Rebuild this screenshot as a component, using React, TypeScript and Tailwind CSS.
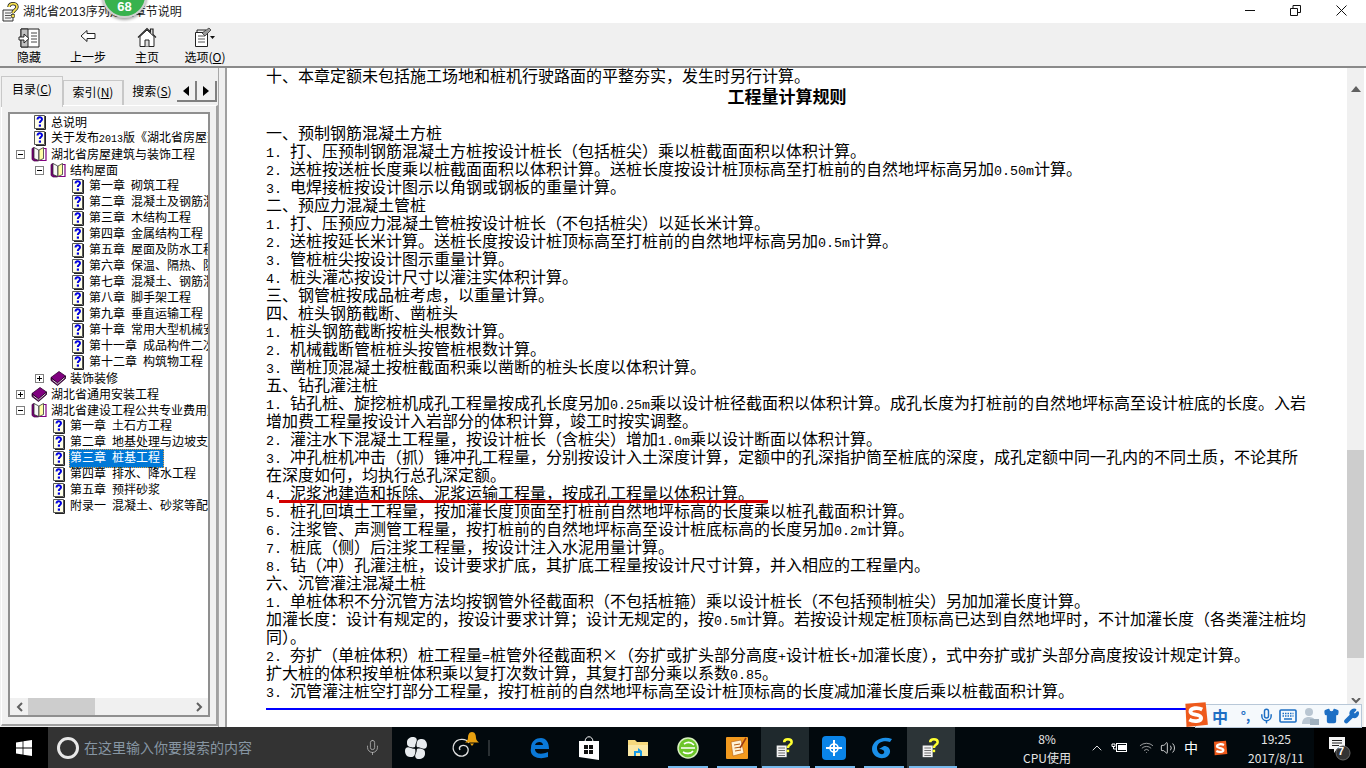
import { ChevronUp, Mic, Shirt, Volume2, Wifi, Wrench } from 'lucide-react';

// half-width runs sit at 5/6 of the CJK size so they take half a cell, like SimSun
function Mixed({ text, latin }: { text: string; latin: string }) {
  const parts = text.split(/([\x20-\x7e]+)/);
  return (
    <>
      {parts.map((p, i) =>
        /^[\x20-\x7e]+$/.test(p) ? (
          <span key={i} className={`whitespace-pre [font-family:'Liberation_Mono',monospace] ${latin}`}>{p}</span>
        ) : (
          <span key={i}>{p}</span>
        )
      )}
    </>
  );
}

function HelpDoc() {
  return (
    <svg width="13" height="16" viewBox="0 0 13 16" className="shrink-0">
      <path d="M0.5 1.5H10.5V14.5H0.5Z" fill="#ffffe8" stroke="#555" />
      <path d="M11.5 2V15.5H2" fill="none" stroke="#222" />
      <path d="M3.5 5.5C3.5 2.5 8 2.5 8 5.2C8 7 5.8 7 5.8 9" fill="none" stroke="#0000e0" strokeWidth="2" />
      <rect x="4.8" y="10.5" width="2.2" height="2.2" fill="#0000e0" />
    </svg>
  );
}

function OpenBook() {
  return (
    <svg width="16" height="16" viewBox="0 0 16 16" className="shrink-0">
      <path d="M1 2.5L3 1.5V12.5L7.5 14.5V15H3L1 13.5Z" fill="#800080" stroke="#400040" strokeWidth="0.7" />
      <path d="M3 1.5L7.8 4V14.5L3 12.5Z" fill="#f8f8f8" stroke="#333" strokeWidth="0.8" />
      <path d="M8 4L12.5 1.5V12.5L8 14.5Z" fill="#ffffa8" stroke="#333" strokeWidth="0.8" />
      <path d="M13 2.5H15V14.5H8.5" fill="none" stroke="#800080" strokeWidth="1.2" />
    </svg>
  );
}

function ClosedBook() {
  return (
    <svg width="16" height="16" viewBox="0 0 16 16" className="shrink-0">
      <path d="M1 7.5L9 1.5L15.5 6L7.5 13Z" fill="#800080" stroke="#300030" strokeWidth="0.8" />
      <path d="M1 7.5V10.5L7.5 15.5L15.5 8.5V6L7.5 13Z" fill="#500050" stroke="#200020" strokeWidth="0.8" />
      <path d="M2.5 10L7.5 13.8L14.5 7.8" fill="none" stroke="#e8e8e8" strokeWidth="0.9" />
    </svg>
  );
}

function Expander({ open }: { open: boolean }) {
  return (
    <span className="relative block h-[9px] w-[9px] shrink-0 border border-[#808080] bg-white">
      <span className="absolute left-[1px] top-[3px] h-px w-[5px] bg-black" />
      {!open && <span className="absolute left-[3px] top-[1px] h-[5px] w-px bg-black" />}
    </span>
  );
}

type TreeItem = { label: string; kind: 'doc' | 'open' | 'closed'; indent: string; selected?: boolean };

const tree: TreeItem[] = [
  { label: '总说明', kind: 'doc', indent: 'pl-[24px]' },
  { label: '关于发布2013版《湖北省房屋建筑与装饰工程》', kind: 'doc', indent: 'pl-[24px]' },
  { label: '湖北省房屋建筑与装饰工程', kind: 'open', indent: 'pl-[6px]' },
  { label: '结构屋面', kind: 'open', indent: 'pl-[25px]' },
  { label: '第一章 砌筑工程', kind: 'doc', indent: 'pl-[62px]' },
  { label: '第二章 混凝土及钢筋混凝土工程', kind: 'doc', indent: 'pl-[62px]' },
  { label: '第三章 木结构工程', kind: 'doc', indent: 'pl-[62px]' },
  { label: '第四章 金属结构工程', kind: 'doc', indent: 'pl-[62px]' },
  { label: '第五章 屋面及防水工程', kind: 'doc', indent: 'pl-[62px]' },
  { label: '第六章 保温、隔热、防腐工程', kind: 'doc', indent: 'pl-[62px]' },
  { label: '第七章 混凝土、钢筋混凝土模板', kind: 'doc', indent: 'pl-[62px]' },
  { label: '第八章 脚手架工程', kind: 'doc', indent: 'pl-[62px]' },
  { label: '第九章 垂直运输工程', kind: 'doc', indent: 'pl-[62px]' },
  { label: '第十章 常用大型机械安拆', kind: 'doc', indent: 'pl-[62px]' },
  { label: '第十一章 成品构件二次运输', kind: 'doc', indent: 'pl-[62px]' },
  { label: '第十二章 构筑物工程', kind: 'doc', indent: 'pl-[62px]' },
  { label: '装饰装修', kind: 'closed', indent: 'pl-[25px]' },
  { label: '湖北省通用安装工程', kind: 'closed', indent: 'pl-[6px]' },
  { label: '湖北省建设工程公共专业费用定额', kind: 'open', indent: 'pl-[6px]' },
  { label: '第一章 土石方工程', kind: 'doc', indent: 'pl-[43px]' },
  { label: '第二章 地基处理与边坡支护工程', kind: 'doc', indent: 'pl-[43px]' },
  { label: '第三章 桩基工程', kind: 'doc', indent: 'pl-[43px]', selected: true },
  { label: '第四章 排水、降水工程', kind: 'doc', indent: 'pl-[43px]' },
  { label: '第五章 预拌砂浆', kind: 'doc', indent: 'pl-[43px]' },
  { label: '附录一 混凝土、砂浆等配合比', kind: 'doc', indent: 'pl-[43px]' },
];

function TreeRow({ item }: { item: TreeItem }) {
  return (
    <div className={`flex h-4 items-center whitespace-nowrap ${item.indent}`}>
      {item.kind !== 'doc' && <Expander open={item.kind === 'open'} />}
      {item.kind !== 'doc' && <span className="w-[6px] shrink-0" />}
      {item.kind === 'doc' && <HelpDoc />}
      {item.kind === 'open' && <OpenBook />}
      {item.kind === 'closed' && <ClosedBook />}
      <span
        className={
          item.selected
            ? 'ml-[3px] border border-dotted border-[#e8a040] bg-[#0078d7] pr-[3px] leading-[14px] text-white'
            : 'ml-[4px] leading-4 text-black'
        }
      >
        <Mixed text={item.label} latin="text-[10px]" />
      </span>
    </div>
  );
}

const body: string[] = [
  '一、预制钢筋混凝土方桩',
  '1. 打、压预制钢筋混凝土方桩按设计桩长（包括桩尖）乘以桩截面面积以体积计算。',
  '2. 送桩按送桩长度乘以桩截面面积以体积计算。送桩长度按设计桩顶标高至打桩前的自然地坪标高另加0.50m计算。',
  '3. 电焊接桩按设计图示以角钢或钢板的重量计算。',
  '二、预应力混凝土管桩',
  '1. 打、压预应力混凝土管桩按设计桩长（不包括桩尖）以延长米计算。',
  '2. 送桩按延长米计算。送桩长度按设计桩顶标高至打桩前的自然地坪标高另加0.5m计算。',
  '3. 管桩桩尖按设计图示重量计算。',
  '4. 桩头灌芯按设计尺寸以灌注实体积计算。',
  '三、钢管桩按成品桩考虑，以重量计算。',
  '四、桩头钢筋截断、凿桩头',
  '1. 桩头钢筋截断按桩头根数计算。',
  '2. 机械截断管桩桩头按管桩根数计算。',
  '3. 凿桩顶混凝土按桩截面积乘以凿断的桩头长度以体积计算。',
  '五、钻孔灌注桩',
  '1. 钻孔桩、旋挖桩机成孔工程量按成孔长度另加0.25m乘以设计桩径截面积以体积计算。成孔长度为打桩前的自然地坪标高至设计桩底的长度。入岩',
  '增加费工程量按设计入岩部分的体积计算，竣工时按实调整。',
  '2. 灌注水下混凝土工程量，按设计桩长（含桩尖）增加1.0m乘以设计断面以体积计算。',
  '3. 冲孔桩机冲击（抓）锤冲孔工程量，分别按设计入土深度计算，定额中的孔深指护筒至桩底的深度，成孔定额中同一孔内的不同土质，不论其所',
  '在深度如何，均执行总孔深定额。',
  '4. 泥浆池建造和拆除、泥浆运输工程量，按成孔工程量以体积计算。',
  '5. 桩孔回填土工程量，按加灌长度顶面至打桩前自然地坪标高的长度乘以桩孔截面积计算。',
  '6. 注浆管、声测管工程量，按打桩前的自然地坪标高至设计桩底标高的长度另加0.2m计算。',
  '7. 桩底（侧）后注浆工程量，按设计注入水泥用量计算。',
  '8. 钻（冲）孔灌注桩，设计要求扩底，其扩底工程量按设计尺寸计算，并入相应的工程量内。',
  '六、沉管灌注混凝土桩',
  '1. 单桩体积不分沉管方法均按钢管外径截面积（不包括桩箍）乘以设计桩长（不包括预制桩尖）另加加灌长度计算。',
  '加灌长度：设计有规定的，按设计要求计算；设计无规定的，按0.5m计算。若按设计规定桩顶标高已达到自然地坪时，不计加灌长度（各类灌注桩均',
  '同）。',
  '2. 夯扩（单桩体积）桩工程量=桩管外径截面积×（夯扩或扩头部分高度+设计桩长+加灌长度），式中夯扩或扩头部分高度按设计规定计算。',
  '扩大桩的体积按单桩体积乘以复打次数计算，其复打部分乘以系数0.85。',
  '3. 沉管灌注桩空打部分工程量，按打桩前的自然地坪标高至设计桩顶标高的长度减加灌长度后乘以桩截面积计算。',
];

function BodyLine({ text }: { text: string }) {
  return (
    <div className="h-[18px] whitespace-nowrap text-[16px] leading-[18px] text-black">
      <Mixed text={text} latin="text-[13.33px]" />
    </div>
  );
}

function ToolButton({ label, center, children }: { label: React.ReactNode; center: string; children: React.ReactNode }) {
  return (
    <div className={`flex flex-col items-center ${center}`}>
      <div className="flex h-[24px] items-end">{children}</div>
      <div className="mt-px whitespace-nowrap text-[12px] leading-[16px] text-black">{label}</div>
    </div>
  );
}

function TaskHelp() {
  return (
    <svg width="20" height="20" viewBox="0 0 24 24">
      <path d="M2 9H14V23H2Z" fill="#f2f2f2" />
      <path d="M4 12H12M4 15H12M4 18H12M4 21H12" stroke="#555" strokeWidth="1" />
      <path d="M11 5C11 0.5 20 0.5 20 5C20 8.5 15.5 8 15.5 12" fill="none" stroke="#ffff30" strokeWidth="3" />
      <rect x="14" y="14" width="3" height="3" fill="#ffff30" />
    </svg>
  );
}

function Sogou({ size }: { size: string }) {
  return (
    <svg viewBox="0 0 24 24" className={size}>
      <path d="M3 2.5L21 1L23 21L4 23Z" fill="#ee5a1c" />
      <path d="M18 7.5C14 5.5 7.5 6 7.5 9.5C7.5 13 17 11 17 15C17 18.5 10 18.5 6.5 16.5" fill="none" stroke="#fff" strokeWidth="3.4" />
    </svg>
  );
}

export default function App() {
  return (
    <div className="relative flex h-[768px] w-[1366px] flex-col overflow-hidden bg-white [font-family:'Noto_Sans_CJK_SC',sans-serif]">
      {/* title bar */}
      <div className="relative flex h-[23px] shrink-0 items-center bg-white pl-[2px]">
        <svg width="18" height="20" viewBox="0 0 18 20" className="shrink-0">
          <path d="M1 8H11V19H1Z" fill="#f4f4f4" stroke="#333" />
          <path d="M3 11H9M3 13.5H9M3 16H9" stroke="#555" />
          <path d="M7 5C7 0.5 15 0.5 15 5C15 8 11 8 11 11" fill="none" stroke="#222" strokeWidth="3.4" />
          <path d="M7 5C7 0.5 15 0.5 15 5C15 8 11 8 11 11" fill="none" stroke="#f5e050" strokeWidth="1.8" />
          <rect x="9.5" y="12.5" width="3" height="3" fill="#f5e050" stroke="#222" strokeWidth="0.6" />
        </svg>
        <span className="ml-[3px] text-[12px] text-[#1a1a1a]">
          湖北省<span className="[font-family:'Liberation_Sans',sans-serif]">2013</span>序列定额章节说明
        </span>
        <div className="ml-auto flex h-full items-center">
          <svg width="45" height="23" viewBox="0 0 45 23" className="shrink-0"><path d="M0 10.5H10" stroke="#111" /></svg>
          <svg width="46" height="23" viewBox="0 0 46 23" className="shrink-0">
            <path d="M0.5 8.5H7.5V15.5H0.5ZM3 8V5.5H10.5V12.5H8" fill="none" stroke="#111" />
          </svg>
          <svg width="30" height="23" viewBox="0 0 30 23" className="shrink-0"><path d="M0.5 5.5L10.5 15.5M10.5 5.5L0.5 15.5" stroke="#111" /></svg>
        </div>
        {/* floating speed ball */}
        <div className="absolute left-[102px] top-[-27px] z-20 flex h-[45px] w-[45px] items-end justify-center rounded-full border-2 border-[#d0d0d0] bg-[#38b24e] pb-[2px] text-[13px] font-bold leading-[14px] text-white shadow-[0_2px_3px_rgba(0,0,0,0.35)] [font-family:'Liberation_Sans',sans-serif]">
          68
        </div>
      </div>

      {/* toolbar */}
      <div className="relative flex h-[45px] shrink-0 border-b-2 border-[#8a8a8a] bg-[#f0f0f0] pt-px">
        <ToolButton label="隐藏" center="ml-[9px] w-[40px]">
          <svg width="22" height="20" viewBox="0 0 22 20">
            <path d="M3 1H21V19H3Z" fill="#fff" stroke="#222" />
            <path d="M3 1H10V19H3Z" fill="#c0c0c0" stroke="#222" />
            <path d="M13 5H19M13 8H19M13 11H19M13 14H19" stroke="#444" />
            <path d="M1 9H6V6L11 10.5L6 15V12H1Z" fill="#fff" stroke="#222" />
          </svg>
        </ToolButton>
        <ToolButton label="上一步" center="ml-[19px] w-[40px]">
          <svg width="16" height="14" viewBox="0 0 16 14" className="mb-[5px]">
            <path d="M1 7L7 1.5V4.5H15V9.5H7V12.5Z" fill="#fff" stroke="#222" />
          </svg>
        </ToolButton>
        <ToolButton label="主页" center="ml-[19px] w-[40px]">
          <svg width="20" height="21" viewBox="0 0 20 21">
            <path d="M1 10.5L10 1.5L13.5 5V2H16V7.5L19 10.5" fill="none" stroke="#222" strokeWidth="1.2" />
            <path d="M3 9.5V19.5H17V9.5L10 3Z" fill="#fff" stroke="#222" />
            <path d="M8 19.5V13H12V19.5" fill="#ddd" stroke="#222" />
          </svg>
        </ToolButton>
        <ToolButton label={<span>选项(<u>O</u>)</span>} center="ml-[14px] w-[48px]">
          <svg width="22" height="21" viewBox="0 0 22 21">
            <path d="M1.5 5.5H13.5V19.5H1.5Z" fill="#fff" stroke="#222" />
            <path d="M3 5.5V3H12" fill="none" stroke="#222" />
            <path d="M4 9H11M4 12H11M4 15H11" stroke="#555" />
            <path d="M8 6L15 1L17 3L11 9Z" fill="#999" stroke="#222" strokeWidth="0.7" />
            <path d="M16 9H21L18.5 12Z" fill="#111" />
          </svg>
        </ToolButton>
      </div>

      {/* main area */}
      <div className="flex h-[659px] shrink-0">
        {/* navigation pane */}
        <div className="flex w-[218px] shrink-0 flex-col bg-[#f0f0f0] pl-px pt-[8px]">
          <div className="relative z-10 flex h-[29px] items-end text-[12px] text-black">
            <div className="mb-[-2px] flex h-[31px] w-[62px] items-center justify-center border border-b-0 border-[#c8c8c8] bg-[#f0f0f0] pb-[7px]">
              目录(<u>C</u>)
            </div>
            <div className="flex h-[25px] w-[60px] items-center justify-center border border-b-0 border-[#c8c8c8] bg-[#f0f0f0] pb-[3px]">
              索引(<u>N</u>)
            </div>
            <div className="flex h-[25px] w-[54px] items-center justify-center overflow-hidden whitespace-nowrap border-l border-[#c8c8c8] bg-[#f0f0f0] pb-[3px] pl-[3px]">
              搜索(<u>S</u>)
            </div>
            <div className="mb-[3px] flex">
              <div className="flex h-[21px] w-[20px] items-center justify-center border-r-2 border-b-2 border-[#808080] bg-[#f0f0f0]">
                <svg width="6" height="10" viewBox="0 0 6 10"><path d="M6 0V10L0 5Z" fill="#000" /></svg>
              </div>
              <div className="flex h-[21px] w-[20px] items-center justify-center border-r-2 border-b-2 border-[#808080] bg-[#f0f0f0]">
                <svg width="6" height="10" viewBox="0 0 6 10"><path d="M0 0V10L6 5Z" fill="#000" /></svg>
              </div>
            </div>
          </div>
          <div className="mb-[1px] flex flex-1 flex-col border-b-2 border-r-2 border-l border-t border-b-[#a0a0a0] border-l-white border-r-[#a0a0a0] border-t-white px-[6px] pb-[7px] pt-[6px]">
            <div className="flex w-[202px] flex-1 flex-col border-2 border-[#8f8f8f] bg-white">
              <div className="min-h-0 flex-1 overflow-hidden text-[12px]">
                {tree.map((item) => (
                  <TreeRow key={`${item.indent}-${item.label}`} item={item} />
                ))}
              </div>
              <div className="flex h-[17px] shrink-0 items-center bg-[#f0f0f0]">
                <div className="flex w-[18px] justify-center">
                  <svg width="7" height="10" viewBox="0 0 7 10"><path d="M6 1L2 5L6 9" fill="none" stroke="#606060" strokeWidth="2" /></svg>
                </div>
                <div className="h-full w-[67px] bg-[#cdcdcd]" />
                <div className="ml-auto flex w-[18px] justify-center">
                  <svg width="7" height="10" viewBox="0 0 7 10"><path d="M1 1L5 5L1 9" fill="none" stroke="#606060" strokeWidth="2" /></svg>
                </div>
              </div>
            </div>
          </div>
        </div>

        {/* splitter */}
        <div className="w-[9px] shrink-0 border-l border-r-2 border-l-[#a8a8a8] border-r-[#a0a0a0] bg-[#f0f0f0]" />

        {/* topic pane */}
        <div className="relative min-w-0 flex-1 overflow-hidden bg-white pl-[39px] pr-[39px]">
          <div className="-mt-[2px]">
            <BodyLine text="十、本章定额未包括施工场地和桩机行驶路面的平整夯实，发生时另行计算。" />
            <div className="mb-[18px] h-[21px] whitespace-nowrap text-center text-[17px] font-bold leading-[24px] text-black">工程量计算规则</div>
            {body.map((line) => (
              <BodyLine key={line} text={line} />
            ))}
            <div className="mt-[9px] h-[2px] bg-[#0000ff]" />
          </div>
          {/* hand drawn red mark in the screenshot */}
          <div className="absolute left-[52px] top-[432px] h-[3px] w-[489px] bg-[#d40000]" />
        </div>

        {/* vertical scrollbar */}
        <div className="flex w-[17px] shrink-0 flex-col items-center bg-[#f0f0f0]">
          <div className="flex h-[24px] w-full items-end justify-center">
            <svg width="10" height="6" viewBox="0 0 10 6"><path d="M5 0L10 6H0Z" fill="#606060" /></svg>
          </div>
          <div className="h-[358px]" />
          <div className="h-[208px] w-full bg-[#cdcdcd]" />
          <div className="mt-[40px] flex justify-center">
            <svg width="10" height="6" viewBox="0 0 10 6"><path d="M1 0L5 4L9 0" fill="none" stroke="#606060" strokeWidth="2" /></svg>
          </div>
        </div>
        <div className="w-[2px] shrink-0 bg-white" />
      </div>

      {/* taskbar */}
      <div className="relative flex h-[41px] shrink-0 bg-[#02090d] text-white">
        <div className="flex w-12 items-center justify-center bg-black">
          <svg width="16" height="16" viewBox="0 0 16 16">
            <path d="M0 2.4L6.6 1.4V7.6H0ZM7.4 1.3L16 0V7.6H7.4ZM0 8.4H6.6V14.6L0 13.6ZM7.4 8.4H16V16L7.4 14.7Z" fill="#fff" />
          </svg>
        </div>
        <div className="flex w-[344px] items-center bg-[#333333] pl-[9px]">
          <div className="h-[22px] w-[22px] rounded-full border-[3px] border-[#e8e8e8]" />
          <span className="ml-[5px] text-[14px] text-[#8796a3]">在这里输入你要搜索的内容</span>
          <Mic size={17} strokeWidth={1} className="ml-auto mr-[11px] text-[#c8c8c8]" />
        </div>

        <div className="flex w-12 items-center justify-center">
          <svg width="22" height="22" viewBox="0 0 22 22">
            <path d="M2 5C2 2 5 0 8 0C11 0 13 2 11 6C10 8 10.5 9 10 10C8 11 4 10 3 9C2 8 2 7 2 5Z" fill="#e8ecef" />
            <path d="M17 2C20 2 22 5 22 8C22 11 20 13 16 11C14 10 13 10.5 12 10C11 8 12 4 13 3C14 2 15 2 17 2Z" fill="#e8ecef" />
            <path d="M20 17C20 20 17 22 14 22C11 22 9 20 11 16C12 14 11.5 13 12 12C14 11 18 12 19 13C20 14 20 15 20 17Z" fill="#e8ecef" />
            <path d="M5 20C2 20 0 17 0 14C0 11 2 9 6 11C8 12 9 11.5 10 12C11 14 10 18 9 19C8 20 7 20 5 20Z" fill="#e8ecef" />
          </svg>
        </div>
        <div className="relative flex w-12 items-center justify-center">
          <svg width="22" height="22" viewBox="0 0 22 22" className="mr-[4px]">
            <path d="M18 6C15 1 6 1 3 7C0 14 6 20 12 19C17 18 19 12 15 9C11 7 7 10 9 13" fill="none" stroke="#e0e0e0" strokeWidth="1.3" />
          </svg>
          <svg width="14" height="14" viewBox="0 0 14 14" className="absolute left-[25px] top-[5px]">
            <path d="M7 0C10 0 11 3 11 6C11 8 13 9.5 14 10.5H0C1 9.5 3 8 3 6C3 3 4 0 7 0Z M5 11.5H9L7 14Z" fill="#e8a010" />
          </svg>
        </div>

        <div className="flex w-[27px] items-center justify-end pr-[25px]">
          <div className="h-[16px] w-[2px] shrink-0 bg-[#2a3033]" />
        </div>

        <div className="flex w-12 items-center justify-center">
          <svg width="22" height="22" viewBox="0 0 22 22">
            <path d="M3 11C3 4 8 1 13 1C18 1 21 5 21 12H7C7 17 13 18 20 15V20C11 23 1 20 3 11ZM7 8H15C15 4 8 4 7 8Z" fill="#0a78d7" />
          </svg>
        </div>
        <div className="ml-[2px] flex w-12 items-center justify-center">
          <svg width="22" height="26" viewBox="0 0 22 26">
            <path d="M7 7C7 0 15 0 15 7" fill="none" stroke="#fff" />
            <path d="M1 6H21V25L1 22Z" fill="#fff" />
            <path d="M6 10H10V14H6ZM11 10H15V14H11ZM6 15H10V19H6ZM11 15H15V19H11Z" fill="#111" />
          </svg>
        </div>
        <div className="ml-px flex w-12 items-center justify-center">
          <svg width="22" height="20" viewBox="0 0 22 20">
            <path d="M1 2H8L10 4H21V18H1Z" fill="#f6d97d" />
            <path d="M1 7H21V18H1Z" fill="#fbe9a6" />
            <path d="M7 18V13H11V10L15 13H15V18H13V15H9V18Z" fill="#1a9be6" />
          </svg>
        </div>
        <div className="ml-[2px] flex w-12 items-center justify-center">
          <svg width="24" height="24" viewBox="0 0 24 24">
            <circle cx="12" cy="12" r="10" fill="#6cc52a" stroke="#d8f0c0" strokeWidth="1.5" />
            <path d="M5 12H19M8 8C11 6 15 6 18 9M7 16C10 18 15 18 17 15" fill="none" stroke="#fff" strokeWidth="1.6" />
          </svg>
        </div>
        <div className="ml-px flex w-12 items-center justify-center">
          <svg width="24" height="24" viewBox="0 0 24 24">
            <rect x="1" y="1" width="22" height="22" rx="1" fill="#f29a1f" />
            <path d="M6 6L16 4L19 17L8 20Z" fill="#fff3d8" stroke="#b45a10" strokeWidth="0.6" />
            <path d="M9 9L15 8M9.5 12L16 11M10 15L16 14" stroke="#b45a10" />
            <path d="M15 12L21 2" stroke="#9a3a10" strokeWidth="1.5" />
          </svg>
        </div>
        <div className="flex w-12 items-center justify-center bg-[#1f292d]">
          <TaskHelp />
        </div>
        <div className="ml-px flex w-12 items-center justify-center">
          <svg width="24" height="24" viewBox="0 0 24 24">
            <rect width="24" height="24" rx="4" fill="#0a84e8" />
            <path d="M12 4V20M4 12H20" stroke="#fff" strokeWidth="2" />
            <circle cx="12" cy="12" r="4" fill="none" stroke="#fff" strokeWidth="1.6" />
          </svg>
        </div>
        <div className="flex w-12 items-center justify-center">
          <svg width="24" height="24" viewBox="0 0 24 24">
            <path d="M22 3C12 -1 2 5 2 13C2 21 12 25 18 20C22 16 20 10 14 10L9 13C13 13 15 15 14 17C12 20 7 17 7 12C7 7 13 4 20 6Z" fill="#1a8fe8" />
          </svg>
        </div>
        <div className="ml-px flex w-12 items-center justify-center bg-[#2c3437]">
          <TaskHelp />
        </div>

        {/* tray */}
        <div className="ml-[67px] flex w-[50px] flex-col items-center justify-center text-[12px] leading-[19px] text-[#e6e6e6]">
          <span>8%</span>
          <span className="whitespace-nowrap">CPU使用</span>
        </div>
        <div className="ml-[17px] flex w-[16px] items-center justify-center">
          <ChevronUp size={16} strokeWidth={1.3} />
        </div>
        <div className="ml-[4px] flex w-[20px] items-center justify-center">
          <svg width="17" height="12" viewBox="0 0 17 12">
            <path d="M1 2H4V4.5H1ZM2.5 5V7H5" fill="none" stroke="#fff" />
            <rect x="5.5" y="1.5" width="10" height="8" fill="none" stroke="#fff" />
            <rect x="7" y="3" width="8" height="5" fill="#fff" />
          </svg>
        </div>
        <div className="ml-[7px] flex w-[20px] items-center justify-center">
          <Wifi size={15} strokeWidth={1.2} className="text-[#c8c8c8]" />
        </div>
        <div className="ml-[2px] flex w-[20px] items-center justify-center">
          <Volume2 size={16} strokeWidth={1.2} />
        </div>
        <div className="ml-[5px] flex w-[16px] items-center justify-center text-[14px]">中</div>
        <div className="ml-[13px] flex w-[16px] items-center justify-center">
          <Sogou size="h-[16px] w-[16px]" />
        </div>
        <div className="ml-[12px] flex w-[72px] flex-col items-center justify-center text-[12px] leading-[19px] text-[#e6e6e6]">
          <span>19:25</span>
          <span className="whitespace-nowrap">2017/8/11</span>
        </div>
        <div className="ml-[2px] flex flex-1 items-center justify-center bg-black pr-[5px]">
          <svg width="26" height="26" viewBox="0 0 26 26">
            <path d="M4 2H20V14H12L9 18V14H4Z" fill="#f4f4f4" />
            <path d="M7 5.5H17M7 8H17M7 10.5H14" stroke="#222" />
            <circle cx="18" cy="18" r="7" fill="#333" stroke="#666" />
          </svg>
        </div>
        <span className="absolute left-[1334px] top-[12px] w-[14px] text-center text-[11px] font-bold leading-[24px] text-white [font-family:'Liberation_Sans',sans-serif]">7</span>

        {/* running-app underlines */}
        <div className="absolute left-[668px] top-[39px] h-[2px] w-[40px] bg-[#76b9ed]" />
        <div className="absolute left-[717px] top-[39px] h-[2px] w-[40px] bg-[#76b9ed]" />
        <div className="absolute left-[762px] top-[39px] h-[2px] w-[48px] bg-[#76b9ed]" />
        <div className="absolute left-[815px] top-[39px] h-[2px] w-[40px] bg-[#76b9ed]" />
        <div className="absolute left-[864px] top-[39px] h-[2px] w-[40px] bg-[#76b9ed]" />
        <div className="absolute left-[909px] top-[39px] h-[2px] w-[48px] bg-[#76b9ed]" />
      </div>

      {/* IME floating bar */}
      <div className="absolute left-[1195px] top-[704px] flex h-[24px] w-[167px] items-center border border-[#b8c8d8] bg-[#f5f9fc] pl-[16px] text-[#1d6fc4]">
        <span className="w-[22px] text-[16px] font-bold leading-[20px]">中</span>
        <span className="ml-[2px] w-[22px] text-center text-[13px] font-bold leading-[14px]">°,</span>
        <Mic size={16} strokeWidth={2.2} className="w-[22px]" />
        <svg width="22" height="14" viewBox="0 0 22 14" className="shrink-0">
          <rect x="3" y="1" width="16" height="12" rx="1" fill="none" stroke="#1d6fc4" strokeWidth="1.6" />
          <path d="M5.5 4.5H16.5M5.5 7H16.5" stroke="#1d6fc4" strokeWidth="1.5" strokeDasharray="1.5 1" />
          <path d="M7 10H15" stroke="#1d6fc4" strokeWidth="1.5" />
        </svg>
        <svg width="22" height="18" viewBox="0 0 22 18" className="shrink-0">
          <circle cx="10" cy="5" r="4" fill="#b9c6d2" />
          <path d="M3 17C3 11 7 10 10 10C13 10 15 11 16 13V17Z" fill="#b9c6d2" />
          <rect x="11" y="12" width="9" height="6" fill="#9fb0be" />
        </svg>
        <Shirt size={16} strokeWidth={2} fill="#1d6fc4" className="w-[22px]" />
        <Wrench size={16} strokeWidth={2.4} fill="#1d6fc4" className="w-[20px]" />
      </div>
      <div className="absolute left-[1182px] top-[701px]">
        <Sogou size="h-[27px] w-[27px]" />
      </div>
    </div>
  );
}
